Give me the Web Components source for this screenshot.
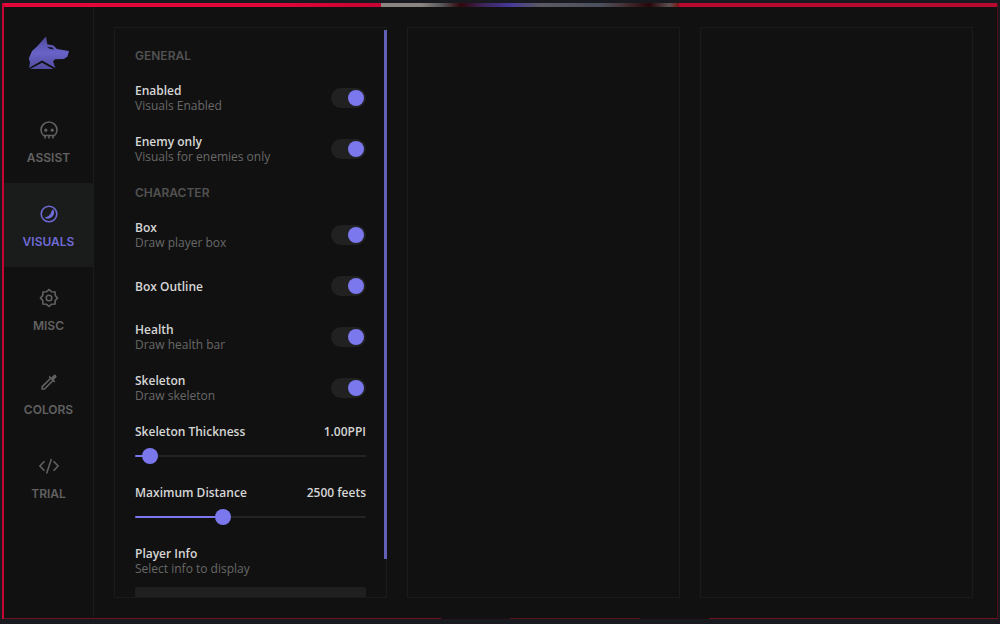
<!DOCTYPE html>
<html lang="en">
<head>
<meta charset="utf-8">
<title>Visuals</title>
<style>
  html, body { margin: 0; height: 100%; }
  body {
    background: #191a20;
    font-family: "Open Sans", "Liberation Sans", sans-serif;
    font-size: 12px;
    line-height: 15px;
    --caps: "Inter", "Liberation Sans", sans-serif;
    --accent: #7b78ee;
    --line: #1b1b1b;
    --fill: #212121;
    --muted: #686868;
    --text: #d6d6d6;
  }
</style>
</head>
<body>
<app-window>
  <side-bar slot="side">
    <nav-item icon="skull" label="ASSIST"></nav-item>
    <nav-item icon="moon" label="VISUALS" active></nav-item>
    <nav-item icon="gear" label="MISC"></nav-item>
    <nav-item icon="picker" label="COLORS"></nav-item>
    <nav-item icon="code" label="TRIAL"></nav-item>
  </side-bar>
  <option-panel scroll>
    <section-title>GENERAL</section-title>
    <toggle-row label="Enabled" hint="Visuals Enabled"></toggle-row>
    <toggle-row label="Enemy only" hint="Visuals for enemies only"></toggle-row>
    <section-title>CHARACTER</section-title>
    <toggle-row label="Box" hint="Draw player box"></toggle-row>
    <toggle-row label="Box Outline"></toggle-row>
    <toggle-row label="Health" hint="Draw health bar"></toggle-row>
    <toggle-row label="Skeleton" hint="Draw skeleton"></toggle-row>
    <slider-row label="Skeleton Thickness" text="1.00PPI" value="1" max="30"></slider-row>
    <slider-row label="Maximum Distance" text="2500 feets" value="2500" max="6750"></slider-row>
    <select-row label="Player Info" hint="Select info to display"></select-row>
  </option-panel>
  <option-panel></option-panel>
  <option-panel></option-panel>
</app-window>

<script>
const define = (name, render) => customElements.define(name, class extends HTMLElement {
  constructor() {
    super();
    this.attachShadow({ mode: 'open' });
  }
  connectedCallback() {
    this.shadowRoot.innerHTML = render(this);
    if (name === 'slider-row') {
      const input = this.shadowRoot.querySelector('input');
      const paint = () => input.style.setProperty('--pos', input.value / input.max);
      input.addEventListener('input', paint);
      paint();
    }
  }
});
const attr = (el, name) => el.getAttribute(name) || '';

const icons = {
  skull: `<path d="M6 18.500V15.500H4.500C3 14.200 2 12.200 2 10A8 8 0 0 1 18 10C18 12.200 17 14.200 15.500 15.500H14V18.500M6 15.500H14M10 15.500V18.500"/><circle cx="6.800" cy="10.200" r="1.600" fill="currentColor" stroke="none"/><circle cx="13.200" cy="10.200" r="1.600" fill="currentColor" stroke="none"/>`,
  moon: `<circle cx="10" cy="10" r="7.800"/><path d="M14.200 5.300A6.200 6.200 0 0 1 5.300 13.500C9.500 13 11.500 10.500 12 8.500C12.500 7 13.300 6 14.200 5.300Z" fill="currentColor" stroke="none"/>`,
  gear: `<path d="M10 1.500L12.400 3.700L16 4L16.300 7.600L18.500 10L16.300 12.400L16 16L12.400 16.300L10 18.500L7.600 16.300L4 16L3.700 12.400L1.500 10L3.700 7.600L4 4L7.600 3.700Z"/><circle cx="10" cy="10" r="2.800"/>`,
  picker: `<path d="M11.700 6.200L3.200 14.700V17H5.500L14 8.500"/><path d="M9.600 5L10.800 3.800L12.400 5.400L14.700 3Q15.800 2 17 3.200Q18.200 4.400 17.200 5.500L14.800 7.800L16.400 9.400L15.200 10.600Z" fill="currentColor" stroke="none"/>`,
  code: `<path d="M5.500 5.200L.9 10L5.500 14.800M14.500 5.200L19.100 10L14.500 14.800M12.400 3L7.600 17.400"/>`
};

define('app-window', () => `
  <style>
    :host { display: block; box-sizing: border-box; height: 100vh; padding: 3px 2px 5px; }
    .frame {
      height: 100%; box-sizing: border-box; display: flex; flex-direction: column;
      background: #111; border-left: 2px solid #c50432; border-right: 1px solid #540c1b;
    }
    .strip, .edge { flex: none; }
    .strip {
      height: 4px;
      background: linear-gradient(90deg, #e3073a 0 26%, #c70333 38%, #8b8581 38% 42%, #5b5a5b 44%, #30060b 46%, #3d2252 48%, #46399a 51%, #5b5a61 54%, #4b505e 60%, #48383d 62%, #280609 65%, #5c5251 67%, #7a100e 68%, #b80930 68% 100%);
    }
    .edge { height: 1px; background: linear-gradient(90deg, #73101f 0 44%, #1d0c10 44% 51%, #5c101b 51% 64%, #1d0c10 64% 71%, #73101f 71%); }
    .body { flex: 1; min-height: 0; display: flex; }
    main {
      flex: 1; min-width: 0; display: grid; grid-auto-flow: column; grid-auto-columns: minmax(0, 1fr);
      grid-template-rows: minmax(0, 1fr); gap: 20px; padding: 20px 24px 20px 20px;
    }
  </style>
  <div class="frame">
    <div class="strip"></div>
    <div class="body"><slot name="side"></slot><main><slot></slot></main></div>
    <div class="edge"></div>
  </div>`);

define('side-bar', () => `
  <style>
    :host { display: block; flex: none; width: 89px; border-right: 1px solid var(--line); }
    header { height: 92px; display: flex; justify-content: center; align-items: center; }
    nav { display: flex; flex-direction: column; }
    svg { display: block; }
  </style>
  <header>
    <svg width="42" height="34" viewBox="0 0 42 34" role="img" aria-label="Wolf">
      <defs><linearGradient id="g" gradientUnits="userSpaceOnUse" x1="0" y1="0" x2="0" y2="34"><stop offset="0" stop-color="#4d4999"/><stop offset=".5" stop-color="#6963c8"/><stop offset="1" stop-color="#4f4a9a"/></linearGradient></defs>
      <path fill="url(#g)" d="M18 .5L19.300 8.300L25.500 9.500L29 13L41 15L39.500 20.500L36 23L27 23.200L25 25.500L27.500 32L14 24.500L1 32L2 26.500L.8 22.500L4 15L9 10.500Z"/>
      <path fill="url(#g)" d="M14 26.800L25.500 33H2Z"/>
      <path fill="#15142a" d="M19 10.800L24.500 11.500L26 13.600L21.500 12.800Z"/>
    </svg>
  </header>
  <nav><slot></slot></nav>`);

define('nav-item', el => `
  <style>
    :host { display: block; color: #616161; }
    :host([active]) { color: #6f6bd6; background: #1a1b1b; }
    a {
      display: flex; flex-direction: column; align-items: center; box-sizing: border-box; height: 84px;
      padding-top: 21px; gap: 10px; color: inherit; text-decoration: none;
      font-family: var(--caps); font-size: 12px; line-height: 15px; font-weight: 600;
    }
    svg { display: block; fill: none; stroke: currentColor; stroke-width: 1.600; }
  </style>
  <a href="#"><svg width="20" height="20" viewBox="0 0 20 20" aria-hidden="true">${icons[attr(el, 'icon')]}</svg><span>${attr(el, 'label')}</span></a>`);

define('option-panel', el => `
  <style>
    :host { display: block; position: relative; min-width: 0; border: 1px solid var(--line); }
    .list { display: flex; flex-direction: column; gap: 20px; padding: 20px; height: 100%; box-sizing: border-box; overflow: hidden; }
    .bar { position: absolute; top: 2px; bottom: 38px; right: -1px; width: 3px; background: #6361b5; }
  </style>
  <div class="list"><slot></slot></div>${el.hasAttribute('scroll') ? '<div class="bar"></div>' : ''}`);

define('section-title', () => `
  <style>
    :host { display: block; flex: none; }
    h2 { margin: 0; font-family: var(--caps); font-size: 12px; line-height: 15px; font-weight: 600; color: #525252; }
  </style>
  <h2><slot></slot></h2>`);

const caption = el => `<span class="name">${attr(el, 'label')}</span>${el.hasAttribute('hint') ? `<span class="hint">${attr(el, 'hint')}</span>` : ''}`;
const captionStyle = `
    :host { display: block; flex: none; }
    .name, .hint { display: block; }
    .name { color: var(--text); font-size: 12px; line-height: 15px; font-weight: 600; }
    .hint { color: var(--muted); font-size: 12px; line-height: 16px; font-weight: 500; }`;

define('toggle-row', el => `
  <style>${captionStyle}
    label { display: flex; justify-content: space-between; align-items: center; min-height: 31px; }
    input {
      appearance: none; flex: none; align-self: flex-start; margin: 5px 0 0; width: 35px; height: 20px;
      border-radius: 10px; padding: 2px; box-sizing: border-box; background: var(--fill); display: flex;
    }
    input::before { content: ""; width: 16px; height: 16px; border-radius: 50%; background: #4a4a4a; }
    input:checked { justify-content: flex-end; }
    input:checked::before { background: var(--accent); }
  </style>
  <label><span>${caption(el)}</span><input type="checkbox" role="switch" checked></label>`);

define('slider-row', el => `
  <style>${captionStyle}
    .top { display: flex; justify-content: space-between; }
    .box { display: flex; flex-direction: column; gap: 9px; min-height: 41px; }
    input { appearance: none; display: block; width: 100%; height: 16px; margin: 0; background: none; }
    input::-webkit-slider-runnable-track {
      height: 2px; border-radius: 1px;
      background: linear-gradient(var(--accent), var(--accent)) 0 0 / calc(8px + (100% - 16px) * var(--pos)) 100% no-repeat, #232323;
    }
    input::-webkit-slider-thumb {
      appearance: none; width: 16px; height: 16px; margin-top: -7px; border-radius: 50%; background: var(--accent);
    }
  </style>
  <div class="box">
    <div class="top"><label class="name" for="range">${attr(el, 'label')}</label><output class="name" for="range">${attr(el, 'text')}</output></div>
    <input id="range" type="range" min="0" max="${attr(el, 'max')}" step="any" value="${attr(el, 'value')}">
  </div>`);

define('select-row', el => `
  <style>${captionStyle}
    label { display: block; margin-bottom: 10px; }
    select { appearance: none; display: block; width: 100%; height: 36px; border: 0; border-radius: 2px; background: #1f1f1f; color: var(--text); }
  </style>
  <label for="info">${caption(el)}</label>
  <select id="info"></select>`);
</script>
</body>
</html>
